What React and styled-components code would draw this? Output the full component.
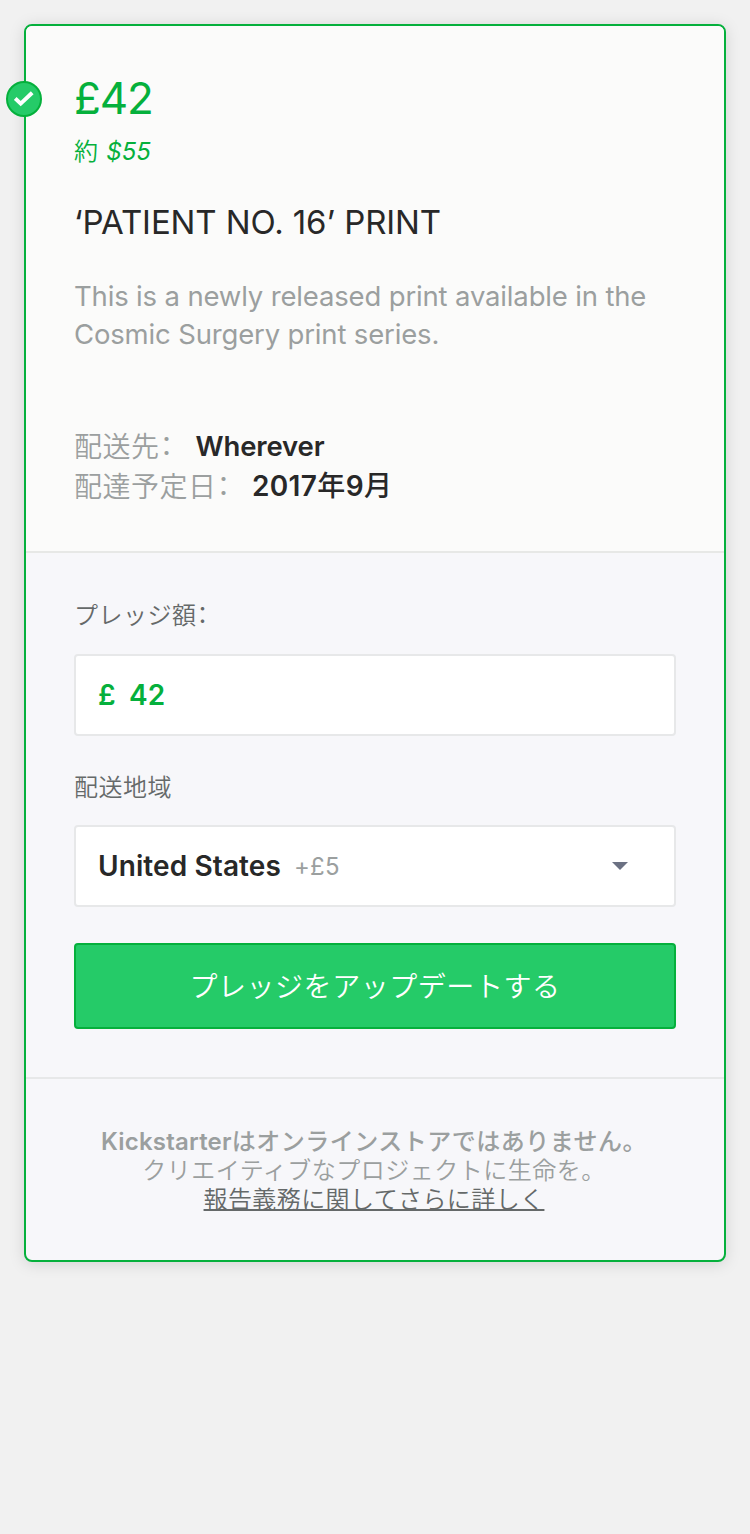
import React from "react";
import styled, { createGlobalStyle } from "styled-components";

const green = "#05b03c";
const fill = "#25cb68";
const line = "#e7e8e9";
const muted = "#9b9f9f";
const ink = "#282828";

const Global = createGlobalStyle`
  * { box-sizing: border-box; }
  body {
    margin: 0;
    background: #f1f1f1;
    font-family: Inter, "Noto Sans CJK JP", sans-serif;
    color: ${ink};
  }
  p, h1, h2 { margin: 0; font-weight: 400; }
`;

const Page = styled.main`
  min-height: 1534px;
  padding: 24px;
`;

const Card = styled.article`
  position: relative;
  border: 2px solid ${green};
  border-radius: 8px;
  background: #f7f7fa;
  box-shadow: 0 2px 16px rgba(0, 0, 0, 0.13);
`;

const Badge = styled.span`
  position: absolute;
  left: -20px;
  top: 55px;
  width: 36px;
  height: 36px;
  display: flex;
  align-items: center;
  justify-content: center;
  border: 2px solid ${green};
  border-radius: 50%;
  background: ${fill};
`;

const Reward = styled.section`
  padding: 48px 48px 44px;
  border-radius: 6px 6px 0 0;
  background: #fbfbfa;
  border-bottom: 2px solid #e7e8e6;
  white-space: nowrap;
`;

const Price = styled.h1`
  font-size: 44px;
  line-height: 48px;
  letter-spacing: -1.1px;
  color: ${green};
`;

const Approx = styled.p`
  margin-top: 15px;
  font-size: 24px;
  font-weight: 350;
  line-height: 30px;
  color: ${green};
  em { margin-left: 1.5px; font-weight: 400; }
`;

const Title = styled.h2`
  margin-top: 35px;
  font-size: 33px;
  line-height: 40px;
  letter-spacing: -0.1px;
`;

const Description = styled.p`
  margin-top: 35px;
  font-size: 27.5px;
  line-height: 38px;
  letter-spacing: -0.16px;
  color: ${muted};
`;

const Details = styled.dl`
  margin: 74px 0 0;
`;

const Detail = styled.div`
  display: flex;
  height: 40px;
  font-size: 28px;
  line-height: 40px;
  dt {
    color: ${muted};
    font-weight: 350;
    letter-spacing: 0.5px;
    width: ${(p) => p.$term}px;
  }
  dd {
    margin: 0;
    font-size: ${(p) => p.$size}px;
    font-weight: 600;
    line-height: 38px;
    letter-spacing: ${(p) => p.$track}px;
  }
`;

const Colon = styled.span`
  font-feature-settings: "halt";
`;

const Medium = styled.span`
  font-weight: 500;
`;

const Form = styled.section`
  padding: 48px 48px 48px;
  border-bottom: 2px solid ${line};
`;

const Label = styled.label`
  display: block;
  margin-top: ${(p) => p.$gap || 0}px;
  font-size: 24px;
  font-weight: 350;
  line-height: 30px;
  letter-spacing: 0.5px;
  color: #656969;
`;

const Field = styled.div`
  display: flex;
  align-items: center;
  height: 82px;
  margin-top: ${(p) => p.$gap}px;
  padding: 0 46px 0 22px;
  border: 2px solid ${line};
  border-radius: 4px;
  background: #fff;
  font-size: 28px;
  font-weight: 600;
  letter-spacing: 0.1px;
  color: ${(p) => (p.$money ? green : ink)};
`;

const Currency = styled.span`
  width: 31px;
`;

const Fee = styled.span`
  margin: 1px 0 0 13px;
  font-size: 24px;
  font-weight: 400;
  letter-spacing: 0.3px;
  color: ${muted};
`;

const Caret = styled.svg`
  margin-left: auto;
`;

const Submit = styled.button`
  display: block;
  width: 100%;
  height: 86px;
  margin-top: 36px;
  padding: 2px 0 0;
  border: 2px solid ${green};
  border-radius: 4px;
  background: ${fill};
  color: #fff;
  font: 350 28px/40px Inter, "Noto Sans CJK JP", sans-serif;
  letter-spacing: 0.55px;
`;

const Footer = styled.footer`
  padding: 48px 2px 46px 0;
  text-align: center;
  font-size: 24px;
  line-height: 29px;
  letter-spacing: 0.5px;
  color: ${muted};
  p { font-weight: 350; }
`;

const Brand = styled.span`
  font-weight: 600;
  letter-spacing: 0.2px;
`;

const More = styled.a`
  color: #656969;
  font-weight: 350;
  letter-spacing: 0.4px;
  text-decoration: underline;
  text-decoration-thickness: 2px;
  text-underline-offset: 1px;
  text-decoration-skip-ink: none;
`;

export default function App() {
  return (
    <Page>
      <Global />
      <Card>
        <Badge>
          <svg width="20" height="16" viewBox="0 0 20 16" fill="none">
            <path d="M1.2 7.4 L6.7 12.6 L18.2 1.8" stroke="#fff" strokeWidth="4" />
          </svg>
        </Badge>
        <Reward>
          <Price>£42</Price>
          <Approx>約 <em>$55</em></Approx>
          <Title>‘PATIENT NO. 16’ PRINT</Title>
          <Description>
            This is a newly released print available in the
            <br />
            Cosmic Surgery print series.
          </Description>
          <Details>
            <Detail $term={121.5} $size={27.5} $track={-0.12}>
              <dt>配送先<Colon>：</Colon></dt>
              <dd>Wherever</dd>
            </Detail>
            <Detail $term={178} $size={28} $track={0.35}>
              <dt>配達予定日<Colon>：</Colon></dt>
              <dd>2017<Medium>年</Medium>9<Medium>月</Medium></dd>
            </Detail>
          </Details>
        </Reward>
        <Form>
          <Label>プレッジ額<Colon>：</Colon></Label>
          <Field $gap={23} $money><Currency>£</Currency>42</Field>
          <Label $gap={37}>配送地域</Label>
          <Field $gap={22}>
            United States<Fee>+£5</Fee>
            <Caret width="16" height="8" viewBox="0 0 16 8">
              <path d="M0 0H16L8 8Z" fill="#6b7183" />
            </Caret>
          </Field>
          <Submit>プレッジをアップデートする</Submit>
        </Form>
        <Footer>
          <p><Brand>Kickstarter</Brand><Medium>はオンラインストアではありません。</Medium></p>
          <p>クリエイティブなプロジェクトに生命を。</p>
          <More>報告義務に関してさらに詳しく</More>
        </Footer>
      </Card>
    </Page>
  );
}
